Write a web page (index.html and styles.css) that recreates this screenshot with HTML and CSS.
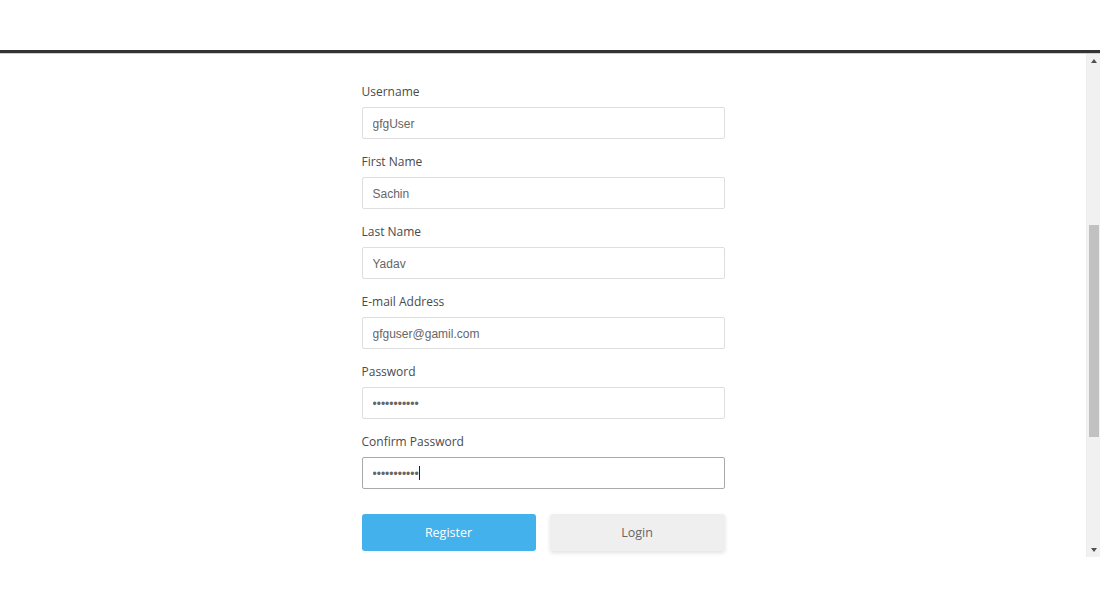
FILE: index.html
```html
<!DOCTYPE html>
<html lang="en">
<head>
<meta charset="utf-8">
<title>Register</title>
<link rel="stylesheet" href="styles.css">
</head>
<body>
<header class="topbar"></header>
<div class="viewport">
  <main class="content">
    <form class="form">
      <div class="field">
        <label class="label">Username</label>
        <input class="input" type="text" value="gfgUser">
      </div>
      <div class="field">
        <label class="label">First Name</label>
        <input class="input" type="text" value="Sachin">
      </div>
      <div class="field">
        <label class="label">Last Name</label>
        <input class="input" type="text" value="Yadav">
      </div>
      <div class="field">
        <label class="label">E-mail Address</label>
        <input class="input" type="text" value="gfguser@gamil.com">
      </div>
      <div class="field">
        <label class="label">Password</label>
        <input class="input" type="password" value="gfgUser1234">
      </div>
      <div class="field">
        <label class="label">Confirm Password</label>
        <div class="input-wrap">
          <input class="input input-focus" type="password" value="gfgUser1234">
          <span class="caret"></span>
        </div>
      </div>
      <div class="actions">
        <button type="button" class="btn btn-primary">Register</button>
        <button type="button" class="btn btn-light">Login</button>
      </div>
    </form>
  </main>
  <div class="scrollbar">
    <div class="arrow arrow-up"></div>
    <div class="track">
      <div class="thumb"></div>
    </div>
    <div class="arrow arrow-down"></div>
  </div>
</div>
</body>
</html>
```

FILE: styles.css
```css
* { box-sizing: border-box; }
html, body { margin: 0; padding: 0; background: #fff; }
body { width: 1100px; height: 600px; overflow: hidden; font-family: "Open Sans", "Liberation Sans", sans-serif; }

.topbar {
  height: 54px;
  border-bottom: 1px solid #cfcfcf;
  box-shadow: inset 0 -3px 0 #333;
  background: #fff;
}

.viewport {
  display: flex;
  height: 503px;
}

.content {
  flex: 1;
  display: flex;
  justify-content: center;
  overflow: hidden;
}

.form {
  width: 363px;
  padding-top: 28px;
  display: flex;
  flex-direction: column;
}

.field {
  display: flex;
  flex-direction: column;
  margin-bottom: 13px;
}

.label {
  font-family: "Open Sans", sans-serif;
  font-size: 12px;
  line-height: 18px;
  padding-top: 1px;
  color: #4a4a4a;
  margin-bottom: 6px;
}

.input {
  width: 363px;
  height: 32px;
  border: 1px solid #dedede;
  border-radius: 2px;
  padding: 1px 10px 0;
  font-family: "Liberation Sans", Arial, sans-serif;
  font-size: 12px;
  color: #666;
  background: #fff;
  outline: none;
}

.input-wrap { position: relative; }
.input-focus { border-color: #a9a9a9; }
.caret {
  position: absolute;
  left: 57px;
  top: 9px;
  width: 1px;
  height: 14px;
  background: #222;
}

.actions {
  display: flex;
  gap: 14px;
  margin-top: 12px;
}

.btn {
  height: 37px;
  border: none;
  border-radius: 3px;
  font-family: "Open Sans", sans-serif;
  font-size: 12.5px;
  cursor: pointer;
}
.btn-primary {
  width: 174px;
  background: #43b1eb;
  color: #fff;
}
.btn-light {
  width: 175px;
  background: #efefef;
  color: #666;
  box-shadow: 0 2px 4px rgba(0,0,0,0.12);
}

.scrollbar {
  width: 14px;
  background: #f1f1f1;
  border-left: 1px solid #ececec;
  display: flex;
  flex-direction: column;
  align-items: center;
}
.arrow {
  height: 14px;
  width: 100%;
  display: flex;
  align-items: center;
  justify-content: center;
}
.arrow::before {
  content: "";
  width: 0;
  height: 0;
  border-left: 3px solid transparent;
  border-right: 3px solid transparent;
}
.arrow-up::before { border-bottom: 4px solid #505050; }
.arrow-down::before { border-top: 4px solid #505050; }
.track {
  flex: 1;
  width: 100%;
  padding: 157px 1px 0 2px;
}
.thumb {
  width: 10px;
  height: 212px;
  background: #c1c1c1;
}
```
